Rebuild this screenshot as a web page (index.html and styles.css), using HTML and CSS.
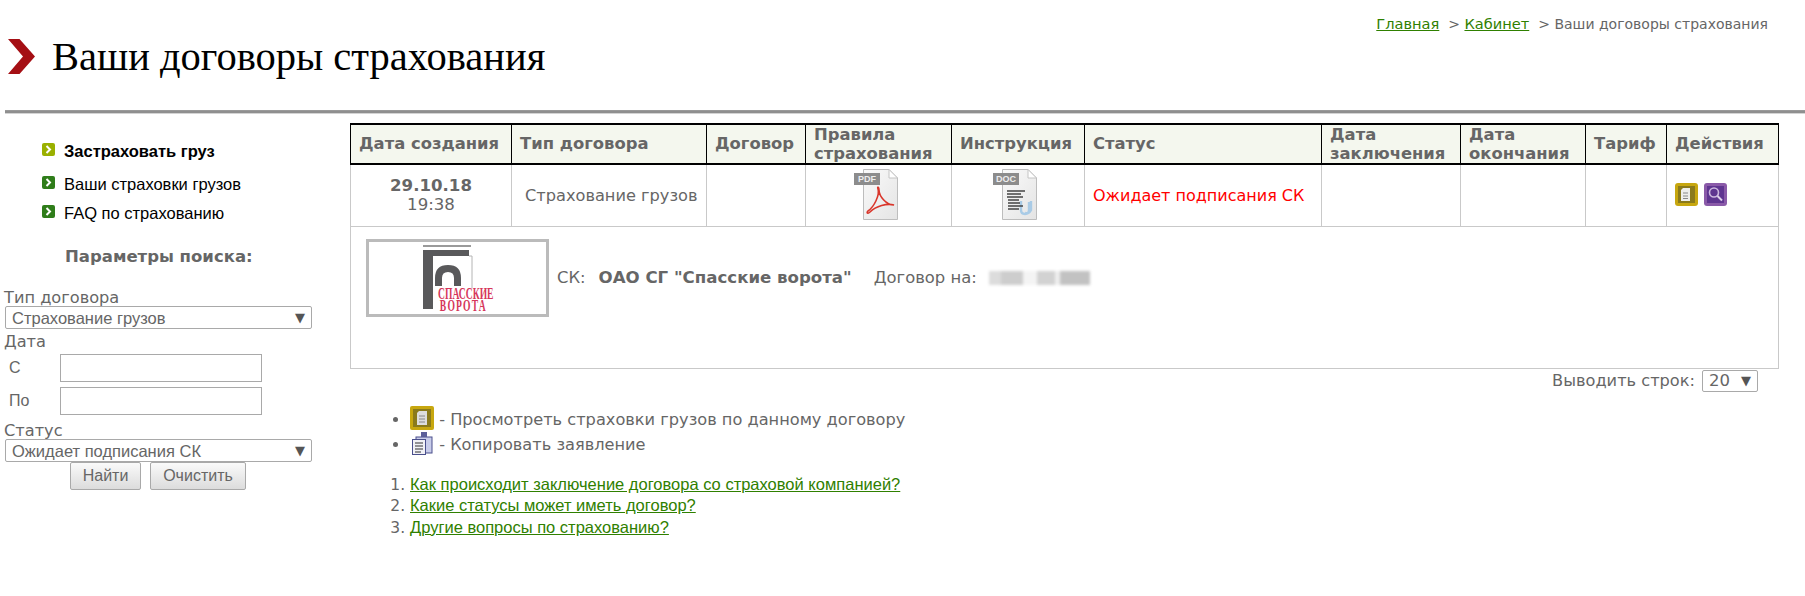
FILE: index.html
```html
<!DOCTYPE html>
<html lang="ru">
<head>
<meta charset="utf-8">
<title>Ваши договоры страхования</title>
<link rel="stylesheet" href="styles.css">
</head>
<body>
<header class="top">
  <nav class="crumbs"><a href="#">Главная</a> &gt; <a href="#">Кабинет</a> &gt; Ваши договоры страхования</nav>
  <div class="title">
    <svg class="chevron" width="27" height="35" viewBox="0 0 27 35"><path d="M0 0H11.500L27 17.500L11.500 35H0L15 17.500Z" fill="#a50f14"/></svg>
    <h1>Ваши договоры страхования</h1>
  </div>
</header>
<div class="rule"></div>
<div class="page">
  <aside class="side">
    <ul class="menu">
      <li class="menu-item active"><svg class="mark" width="13" height="13" viewBox="0 0 13 13"><rect width="13" height="13" rx="2" fill="#9ab000"/><path d="M4.500 3L8 6.500L4.500 10" fill="none" stroke="#fff" stroke-width="2"/></svg><a href="#">Застраховать груз</a></li>
      <li class="menu-item second"><svg class="mark" width="13" height="13" viewBox="0 0 13 13"><rect width="13" height="13" rx="2" fill="#2f7d1a"/><path d="M4.500 3L8 6.500L4.500 10" fill="none" stroke="#fff" stroke-width="2"/></svg><a href="#">Ваши страховки грузов</a></li>
      <li class="menu-item third"><svg class="mark" width="13" height="13" viewBox="0 0 13 13"><rect width="13" height="13" rx="2" fill="#2f7d1a"/><path d="M4.500 3L8 6.500L4.500 10" fill="none" stroke="#fff" stroke-width="2"/></svg><a href="#">FAQ по страхованию</a></li>
    </ul>
    <h3 class="search-title">Параметры поиска:</h3>
    <form class="search">
      <label class="flabel">Тип договора</label>
      <div class="sel wide"><select><option>Страхование грузов</option></select></div>
      <label class="flabel date-label">Дата</label>
      <div class="date first"><span>С</span><input type="text"></div>
      <div class="date"><span>По</span><input type="text"></div>
      <label class="flabel status">Статус</label>
      <div class="sel wide"><select><option>Ожидает подписания СК</option></select></div>
      <div class="btns"><button type="button" class="b1">Найти</button><button type="button" class="b2">Очистить</button></div>
    </form>
  </aside>
  <main class="main">
    <table class="grid">
      <thead>
        <tr>
          <th class="c1">Дата создания</th><th class="c2">Тип договора</th><th class="c3">Договор</th><th class="c4">Правила страхования</th><th class="c5">Инструкция</th><th class="c6">Статус</th><th class="c7">Дата заключения</th><th class="c8">Дата окончания</th><th class="c9">Тариф</th><th class="c10">Действия</th>
        </tr>
      </thead>
      <tbody>
        <tr class="row">
          <td class="date-cell"><b>29.10.18</b><br>19:38</td>
          <td class="type-cell">Страхование грузов</td>
          <td></td>
          <td class="doc-cell">
            <svg class="file" width="50" height="52" viewBox="0 0 50 52">
              <defs><linearGradient id="pg" x1="0" y1="0" x2="1" y2="1"><stop offset="0" stop-color="#fafafa"/><stop offset="1" stop-color="#e4e4e4"/></linearGradient></defs>
              <path d="M9.500 .5H35L43.500 9V50.500H9.500Z" fill="url(#pg)" stroke="#bdbdbd"/>
              <path d="M35 .5V9H43.500Z" fill="#fff" stroke="#c4c4c4"/>
              <rect x="0" y="4" width="26" height="12" fill="#8c8c8c"/>
              <text x="13" y="13" class="tag">PDF</text>
              <path d="M14 42C20 38 26 26 24 20C23 17 25 18 25 21C25 27 32 36 40 36C33 34 22 37 16 43C14 45 12 44 14 42Z" fill="none" stroke="#d9352a" stroke-width="1.600"/>
            </svg>
          </td>
          <td class="doc-cell">
            <svg class="file" width="50" height="52" viewBox="0 0 50 52">
              <path d="M9.500 .5H35L43.500 9V50.500H9.500Z" fill="url(#pg)" stroke="#bdbdbd"/>
              <path d="M35 .5V9H43.500Z" fill="#fff" stroke="#c4c4c4"/>
              <rect x="0" y="4" width="26" height="12" fill="#8c8c8c"/>
              <text x="13" y="13" class="tag">DOC</text>
              <path d="M28 32V41Q28 45 32 45Q36 45 36 41V33M32 44Q36 45 38 41V32" fill="none" stroke="#a9cbe6" stroke-width="2.400"/>
              <path d="M14 22H32M14 25H28M14 28H30M15 31H26M15 34H27M15 37H30M15 40H26" stroke="#444" stroke-width="1.500"/>
            </svg>
          </td>
          <td class="status-cell">Ожидает подписания СК</td>
          <td></td><td></td><td></td>
          <td class="act-cell">
            <svg class="act" width="23" height="23" viewBox="0 0 23 23"><rect width="23" height="23" rx="3" fill="#c7a70f"/><rect x="3" y="3" width="17" height="17" fill="#8a7a1b"/><path d="M8 5H15V18H6V7Z" fill="#eeeeea"/><path d="M8 10H13M8 13H13M8 15.500H13" stroke="#888" stroke-width="1"/></svg><svg class="act" width="23" height="23" viewBox="0 0 23 23"><rect width="23" height="23" rx="3" fill="#8a5aa8"/><rect x="3" y="3" width="17" height="17" fill="#5f3590"/><circle cx="10" cy="9.500" r="4.500" fill="none" stroke="#cdb8de" stroke-width="1.600"/><path d="M13.500 13L18 17.500" stroke="#ddd0e8" stroke-width="2"/></svg>
          </td>
        </tr>
        <tr>
          <td colspan="10" class="detail">
            <div class="company">
              <div class="logo">
                <svg width="177" height="72" viewBox="0 0 177 72">
                  <rect x="54" y="3" width="48" height="2" fill="#9a9a9a"/>
                  <path d="M54 8H100V14H64V67H54Z" fill="#59595b"/>
                  <path d="M100 14H103V46" fill="none" stroke="#b4b4b4"/>
                  <path d="M66 44V36Q66 23 79 23Q92 23 92 36V44H85V36Q85 30 79 30Q73 30 73 36V44Z" fill="#59595b"/>
                  <text class="logo-word" transform="translate(69 0) scale(.6 1)"><tspan x="0" y="57">СПАССКИЕ</tspan><tspan class="logo-line" x="3" y="69">ВОРОТА</tspan></text>
                </svg>
              </div>
              <span class="sk">СК:</span><b class="sk-name">ОАО СГ "Спасские ворота"</b><span class="contract">Договор на:</span>
              <span class="blurred"><i class="p1"></i><i class="p2"></i><i class="p3"></i><i class="p4"></i><i class="p5"></i><i class="p6"></i></span>
            </div>
          </td>
        </tr>
      </tbody>
    </table>
    <div class="rows-line"><span>Выводить строк:</span><div class="sel small"><select><option>20</option></select></div></div>
    <ul class="legend">
      <li><svg class="leg-a" width="24" height="24" viewBox="0 0 24 24"><rect width="24" height="24" rx="2" fill="#c7a70f"/><rect x="3" y="3" width="18" height="18" fill="#8a7a1b"/><path d="M9 5H17V19H7V7Z" fill="#ddd"/><path d="M9 10H15M9 13H15M9 16H15" stroke="#888"/></svg> - Просмотреть страховки грузов по данному договору</li>
      <li><svg class="leg-b" width="24" height="24" viewBox="0 0 24 24"><rect x="6" y="6" width="16" height="16" fill="#c9cdea" stroke="#4a4f8c"/><rect x="11" y="1" width="6" height="5" fill="#5c5f99"/><rect x="2.500" y="8.500" width="13" height="15" fill="#f1f1f6" stroke="#4a4f8c"/><path d="M5 12H13M5 15H13M5 18H13M5 21H11" stroke="#333" stroke-width="1.200"/></svg> - Копировать заявление</li>
    </ul>
    <ol class="faq">
      <li><a href="#">Как происходит заключение договора со страховой компанией?</a></li>
      <li><a href="#">Какие статусы может иметь договор?</a></li>
      <li><a href="#">Другие вопросы по страхованию?</a></li>
    </ol>
  </main>
</div>
</body>
</html>
```
FILE: styles.css
```css
* { box-sizing: border-box; }
html, body { margin: 0; padding: 0; }
body { background: #fff; color: #666; font-family: "DejaVu Sans", Verdana, sans-serif; font-size: 16.2px; height: 596px; overflow: hidden; }
a { color: #2f8000; }

.top { height: 110px; padding-top: 15px; position: relative; }
.crumbs { text-align: right; padding-right: 37px; font-size: 14px; line-height: 18px; }
.crumbs a { font-size: 14.600px; margin-right: 4.500px; }
.title { display: flex; align-items: center; margin-top: 6px; padding-left: 8px; height: 35px; }
.chevron { flex: none; }
.title h1 { margin: 0 0 0 17px; font: normal 40.500px/48px "Liberation Serif", "Times New Roman", serif; color: #000; white-space: nowrap; }
.rule { margin: 0 0 0 5px; height: 4px; background: #8f8f8f; border-bottom: 1px solid #d4d4d4; border-top: 1px solid #999; }

.page { display: flex; }
.side { width: 350px; flex: none; }
.menu { list-style: none; margin: 0; padding: 28px 0 0 42px; font-family: "Liberation Sans", Arial, sans-serif; font-size: 16.500px; }
.menu-item { display: flex; align-items: center; height: 18px; white-space: nowrap; }
.menu-item a { color: #000; text-decoration: none; margin-left: 9px; }
.menu-item.active a { font-weight: bold; }
.mark { flex: none; margin-top: -3px; }
.menu-item.second { margin-top: 15px; }
.menu-item.third { margin-top: 11px; }

.search-title { margin: 25px 0 0 65px; font-size: 16.500px; line-height: 20px; font-weight: bold; color: #666; }
.search { display: flex; flex-direction: column; align-items: flex-start; padding: 22px 0 0 5px; width: 320px; }
.flabel { display: block; font-size: 16.200px; line-height: 18px; height: 17px; margin-left: -1px; white-space: nowrap; }
.flabel.date-label { margin-top: 4px; }
.flabel.status { margin-top: 7px; }
.sel { position: relative; }
.sel select { display: block; width: 100%; height: 100%; appearance: none; -webkit-appearance: none; background: #fff; border: 1px solid #a9a9a9; border-radius: 2px; padding: 0 20px 0 6px; color: #666; font-family: "Liberation Sans", Arial, sans-serif; font-size: 16.500px; }
.sel::after { content: "▼"; position: absolute; right: 7px; top: 50%; transform: translateY(-50%); font-size: 13px; line-height: 14px; color: #555; pointer-events: none; }
.sel.wide { width: 307px; height: 23px; }
.date { display: flex; align-items: center; height: 28px; margin-top: 5px; }
.date.first { margin-top: 4px; }
.date span { width: 55px; padding-left: 4px; font-family: "Liberation Sans", Arial, sans-serif; font-size: 16px; }
.date input { width: 202px; height: 28px; border: 1px solid #a9a9a9; background: #fff; margin: 0; }
.btns { display: flex; gap: 9px; padding-left: 65px; }
.btns button { height: 28px; padding: 0; border: 1px solid #a9a9a9; border-radius: 2px; background: linear-gradient(#fafafa, #dcdcdc); color: #666; font-family: "Liberation Sans", Arial, sans-serif; font-size: 16px; }
.b1 { width: 71px; }
.b2 { width: 96px; }

.main { width: 1428px; flex: none; padding-top: 9px; }
.grid { border-collapse: collapse; table-layout: fixed; width: 1428px; }
.grid th { height: 40px; padding: 1px 8px 0; background: #f4f7ee; border: 1px solid #000; border-width: 2px 1px; color: #666; font-size: 16.400px; line-height: 18.500px; font-weight: bold; text-align: left; vertical-align: middle; }
.c1 { width: 161px; } .c2 { width: 195px; } .c3 { width: 99px; } .c4 { width: 146px; } .c5 { width: 133px; }
.c6 { width: 237px; } .c7 { width: 139px; } .c8 { width: 125px; } .c9 { width: 81px; } .c10 { width: 112px; }
.grid td { border: 1px solid #c9c9c9; padding: 0 8px; }
.row td { height: 62px; }
.date-cell { text-align: center; line-height: 19px; font-size: 16.600px; }
.type-cell { white-space: nowrap; padding-left: 13px !important; }
.doc-cell { text-align: center; }
.file { display: inline-block; vertical-align: middle; }
.tag { font: bold 9px "Liberation Sans", Arial, sans-serif; fill: #eee; text-anchor: middle; }
.status-cell { color: #f00; white-space: nowrap; font-size: 16px; }
.act-cell { white-space: nowrap; }
.act { display: inline-block; vertical-align: middle; margin-right: 6px; margin-top: -1px; }
.detail { height: 142px; vertical-align: top; padding: 12px 15px 0 !important; }
.company { display: flex; align-items: center; height: 78px; white-space: nowrap; font-size: 16.400px; }
.logo { width: 183px; height: 78px; border: 3px solid #bbb; flex: none; background: #fff; margin-right: 8px; }
.logo svg { display: block; }
.logo-word { font: bold 16px "Liberation Serif", serif; fill: #d6365a; }
.logo-line { letter-spacing: 2px; }
.sk-name { margin-left: 13px; font-size: 16.600px; }
.contract { margin-left: 22px; }
.blurred { display: flex; margin-left: 12px; height: 14px; filter: blur(1.500px); }
.blurred i { display: block; height: 14px; }
.blurred .p1 { width: 12px; background: #dcdcdc; } .blurred .p2 { width: 22px; background: #cdcdcd; } .blurred .p3 { width: 14px; background: #f4f4f4; } .blurred .p4 { width: 18px; background: #d2d2d2; } .blurred .p5 { width: 5px; background: #efefef; } .blurred .p6 { width: 30px; background: #c2c2c2; }

.rows-line { display: flex; align-items: center; justify-content: flex-end; height: 24px; padding-right: 20px; gap: 7px; }
.sel.small { width: 56px; height: 22px; }
.sel.small select { font-family: "DejaVu Sans", Verdana, sans-serif; }
.legend { margin: 14px 0 0; padding: 0 0 0 60px; list-style: disc; line-height: 25px; }
.legend li { height: 25px; white-space: nowrap; }
.legend svg { vertical-align: middle; margin-top: -4px; }
.faq { margin: 17px 0 0; padding: 0 0 0 60px; font-family: "Liberation Sans", Arial, sans-serif; font-size: 16.500px; line-height: 21.500px; }
.faq li { white-space: nowrap; }
.faq li::marker { font-family: "DejaVu Sans", Verdana, sans-serif; font-size: 15.500px; }
```
